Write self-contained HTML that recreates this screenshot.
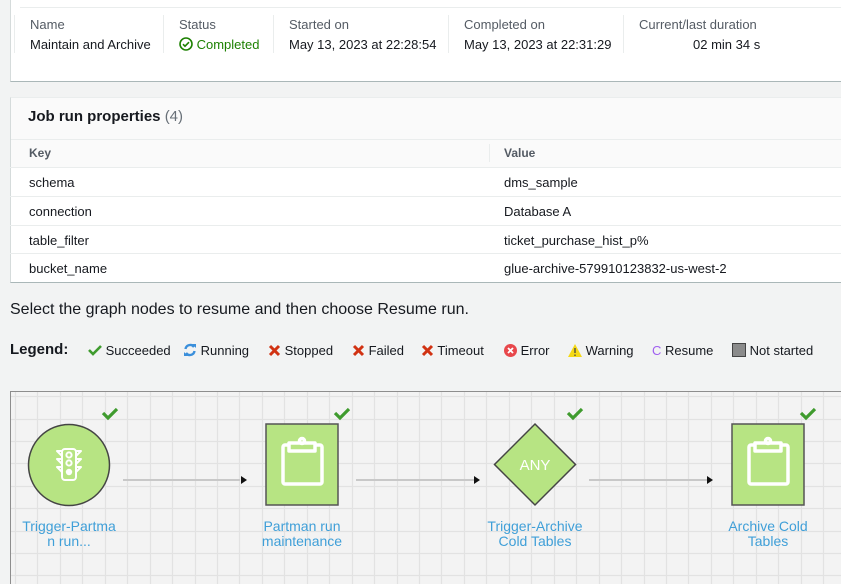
<!DOCTYPE html>
<html><head><style>
*{margin:0;padding:0;box-sizing:border-box}
body{width:841px;height:584px;overflow:hidden;background:#f2f3f3;font-family:"Liberation Sans",Arial,sans-serif;color:#16191f;position:relative}
.abs{position:absolute}
.lbl{font-size:13px;color:#545b64}
.val{font-size:13px;color:#16191f}
.div{position:absolute;top:15px;height:38px;border-left:1px solid #eaeded}
.row{position:absolute;left:10px;width:831px;height:29px;border-top:1px solid #eaeded;font-size:13px}
.row span{position:absolute;top:7px}
.lg{position:absolute;top:343px;font-size:13px;color:#16191f}
.nl{position:absolute;width:120px;text-align:center;color:#3f9fd8;font-family:Arial,"Liberation Sans",sans-serif;font-size:14px;line-height:15px}
</style></head><body>
<div class="abs" style="left:10px;top:0;width:831px;height:82px;background:#fff;border-left:1px solid #d5dbdb;border-bottom:1px solid #aab7b8"></div>
<div class="abs" style="left:20px;top:7px;width:821px;border-top:1px solid #eaeded"></div>
<div class="div" style="left:14px"></div><div class="div" style="left:163px"></div><div class="div" style="left:273px"></div><div class="div" style="left:448px"></div><div class="div" style="left:623px"></div>
<div class="abs lbl" style="left:30px;top:17px">Name</div><div class="abs val" style="left:30px;top:37px">Maintain and Archive</div>
<div class="abs lbl" style="left:179px;top:17px">Status</div>
<div class="abs" style="left:179px;top:37px;font-size:13px;color:#1d8102"><svg width="14" height="14" viewBox="0 0 14 14" style="vertical-align:-2px"><circle cx="7" cy="7" r="6" fill="none" stroke="#1d8102" stroke-width="1.6"/><path d="M4 7.2l2 2 4-4" fill="none" stroke="#1d8102" stroke-width="1.6"/></svg> Completed</div>
<div class="abs lbl" style="left:289px;top:17px">Started on</div><div class="abs val" style="left:289px;top:37px">May 13, 2023 at 22:28:54</div>
<div class="abs lbl" style="left:464px;top:17px">Completed on</div><div class="abs val" style="left:464px;top:37px">May 13, 2023 at 22:31:29</div>
<div class="abs lbl" style="left:639px;top:17px">Current/last duration</div><div class="abs val" style="left:693px;top:37px">02 min 34 s</div>

<div class="abs" style="left:10px;top:97px;width:831px;height:186px;background:#fff;border-left:1px solid #d5dbdb;border-top:1px solid #eaeded;border-bottom:1px solid #aab7b8"></div>
<div class="abs" style="left:11px;top:98px;width:830px;height:41px;background:#fafafa"></div>
<div class="abs" style="left:28px;top:108px;font-size:15px;font-weight:bold">Job run properties <span style="font-weight:normal;color:#687078">(4)</span></div>
<div class="abs" style="left:11px;top:139px;width:830px;height:28px;background:#fafafa;border-top:1px solid #eaeded"></div>
<div class="abs" style="left:489px;top:144px;height:18px;border-left:1px solid #eaeded"></div>
<div class="abs" style="left:29px;top:146px;font-size:12px;font-weight:bold;color:#545b64">Key</div>
<div class="abs" style="left:504px;top:146px;font-size:12px;font-weight:bold;color:#545b64">Value</div>
<div class="row" style="top:167px"><span style="left:19px">schema</span><span style="left:494px">dms_sample</span></div>
<div class="row" style="top:196px"><span style="left:19px">connection</span><span style="left:494px">Database A</span></div>
<div class="row" style="top:225px"><span style="left:19px">table_filter</span><span style="left:494px">ticket_purchase_hist_p%</span></div>
<div class="row" style="top:253px"><span style="left:19px">bucket_name</span><span style="left:494px">glue-archive-579910123832-us-west-2</span></div>

<div class="abs" style="left:10px;top:301px;font-size:16px">Select the graph nodes to resume and then choose Resume run.</div>

<div class="lg" style="left:10px;top:341px;font-size:15px;font-weight:bold">Legend:</div>
<div class="lg" style="left:88px"><svg width="14" height="12" viewBox="0 0 14 12" style="vertical-align:-1px"><path d="M1 6l4 4 8-8" fill="none" stroke="#3f9b2e" stroke-width="2.6"/></svg> Succeeded</div>
<div class="lg" style="left:183px"><svg width="14" height="14" viewBox="0 0 14 14" style="vertical-align:-2px"><path d="M2.5 6A4.7 4.7 0 0 1 11 4" fill="none" stroke="#3b8fdb" stroke-width="2.4"/><path d="M9 1h4v4z" fill="#3b8fdb"/><path d="M11.5 8A4.7 4.7 0 0 1 3 10" fill="none" stroke="#3b8fdb" stroke-width="2.4"/><path d="M5 13H1V9z" fill="#3b8fdb"/></svg> Running</div>
<div class="lg" style="left:268px"><svg width="13" height="13" viewBox="0 0 13 13" style="vertical-align:-2px"><path d="M2 2l9 9M11 2l-9 9" stroke="#d13212" stroke-width="3"/></svg> Stopped</div>
<div class="lg" style="left:352px"><svg width="13" height="13" viewBox="0 0 13 13" style="vertical-align:-2px"><path d="M2 2l9 9M11 2l-9 9" stroke="#d13212" stroke-width="3"/></svg> Failed</div>
<div class="lg" style="left:421px"><svg width="13" height="13" viewBox="0 0 13 13" style="vertical-align:-2px"><path d="M2 2l9 9M11 2l-9 9" stroke="#d13212" stroke-width="3"/></svg> Timeout</div>
<div class="lg" style="left:504px"><svg width="13" height="13" viewBox="0 0 13 13" style="vertical-align:-2px"><circle cx="6.5" cy="6.5" r="6.5" fill="#e8474b"/><path d="M4 4l5 5M9 4l-5 5" stroke="#fff" stroke-width="1.8"/></svg> Error</div>
<div class="lg" style="left:568px"><svg width="14" height="13" viewBox="0 0 14 13" style="vertical-align:-2px"><path d="M7 0L14 13H0Z" fill="#f5d916"/><path d="M7 4v5M7 10.5v1.5" stroke="#444" stroke-width="1.3"/></svg> Warning</div>
<div class="lg" style="left:652px"><span style="color:#a05ff0">C</span> Resume</div>
<div class="lg" style="left:732px"><span style="display:inline-block;width:14px;height:14px;background:#8b8b8b;border:1px solid #444;vertical-align:-2px"></span> Not started</div>

<svg class="abs" style="left:10px;top:391px" width="831" height="193">
<rect width="831" height="193" fill="#f3f3f3"/>
<path stroke="#e2e2e2" stroke-width="1.2" fill="none" d="M5.5 0V193M27.5 0V193M50.5 0V193M72.5 0V193M95.5 0V193M117.5 0V193M140.5 0V193M162.5 0V193M185.5 0V193M207.5 0V193M229.5 0V193M252.5 0V193M274.5 0V193M297.5 0V193M319.5 0V193M342.5 0V193M364.5 0V193M387.5 0V193M409.5 0V193M431.5 0V193M454.5 0V193M476.5 0V193M499.5 0V193M521.5 0V193M544.5 0V193M566.5 0V193M589.5 0V193M611.5 0V193M634.5 0V193M656.5 0V193M678.5 0V193M701.5 0V193M723.5 0V193M746.5 0V193M768.5 0V193M791.5 0V193M813.5 0V193M0 5.5H831M0 28.5H831M0 50.5H831M0 72.5H831M0 95.5H831M0 117.5H831M0 140.5H831M0 162.5H831M0 184.5H831"/>
<path d="M0.5 193V0.5H831" stroke="#8d8d8d" fill="none"/>
</svg>

<svg class="abs" style="left:0;top:391px" width="841" height="193" viewBox="0 391 841 193">
<defs><path id="ck" d="M0 5l5 5 9-9" fill="none" stroke="#3f9b2e" stroke-width="3.2"/></defs>
<use href="#ck" x="103" y="408"/><use href="#ck" x="335" y="408"/><use href="#ck" x="568" y="408"/><use href="#ck" x="801" y="408"/>
<g stroke="#c8c8c8" stroke-width="2"><line x1="123" y1="480" x2="240" y2="480"/><line x1="356" y1="480" x2="474" y2="480"/><line x1="589" y1="480" x2="708" y2="480"/></g>
<g fill="#111"><path d="M241 476l6 4-6 4z"/><path d="M474 476l6 4-6 4z"/><path d="M707 476l6 4-6 4z"/></g>
<circle cx="69" cy="465" r="40.5" fill="#b7e483" stroke="#444" stroke-width="1.5"/>
<g fill="none" stroke="#fff" stroke-width="2" stroke-linejoin="round"><rect x="62" y="449" width="14" height="31" rx="3"/><path d="M62 451h-5l5 5M76 451h5l-5 5M62 459h-5l5 5M76 459h5l-5 5M62 467h-5l5 5M76 467h5l-5 5"/><circle cx="69" cy="455" r="2.6"/><circle cx="69" cy="463" r="2.6"/></g><circle cx="69" cy="472" r="3.2" fill="#fff"/>
<rect x="266" y="424" width="72" height="81" fill="#b7e483" stroke="#555" stroke-width="1.5"/>
<rect x="732" y="424" width="72" height="81" fill="#b7e483" stroke="#555" stroke-width="1.5"/>
<g fill="none" stroke="#fff" stroke-width="3.5" stroke-linejoin="round">
<path d="M289 445h-4a2 2 0 0 0-2 2v35a2 2 0 0 0 2 2h35a2 2 0 0 0 2-2v-35a2 2 0 0 0-2-2h-4"/><path d="M289 443h26v8h-26z"/><circle cx="302" cy="441" r="2.5"/>
<path d="M755 445h-4a2 2 0 0 0-2 2v35a2 2 0 0 0 2 2h35a2 2 0 0 0 2-2v-35a2 2 0 0 0-2-2h-4"/><path d="M755 443h26v8h-26z"/><circle cx="768" cy="441" r="2.5"/></g>
<path d="M535 424l40.5 40.5L535 505l-40.5-40.5z" fill="#b7e483" stroke="#444" stroke-width="1.5"/>
<text x="535" y="470" text-anchor="middle" fill="#fff" font-family="Arial,'Liberation Sans',sans-serif" font-size="15">ANY</text>
</svg>
<div class="nl" style="left:9px;top:519px">Trigger-Partma<br>n run...</div>
<div class="nl" style="left:242px;top:519px">Partman run<br>maintenance</div>
<div class="nl" style="left:475px;top:519px">Trigger-Archive<br>Cold Tables</div>
<div class="nl" style="left:708px;top:519px">Archive Cold<br>Tables</div>
</body></html>
